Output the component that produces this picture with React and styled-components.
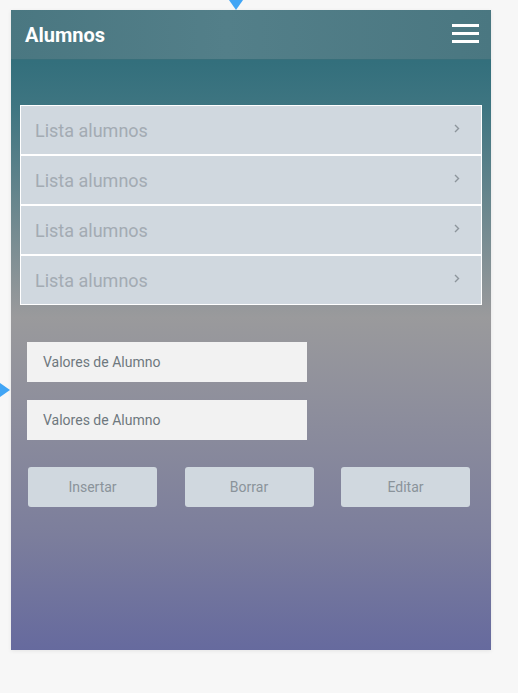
import styled, { createGlobalStyle } from 'styled-components';

const GlobalStyle = createGlobalStyle`
    html, body {
        margin: 0;
        padding: 0;
        background: #f7f7f7;
        font-family: Roboto, "Liberation Sans", sans-serif;
    }
`

const Page = styled.div`
    position: relative;
    width: 518px;
    height: 693px;
    padding: 10px 0 0 11px;
    box-sizing: border-box;
`

const Marker = styled.span`
    position: absolute;
    width: 0;
    height: 0;
    border-style: solid;
    border-color: transparent;
    ${props => props.side === 'top' ? `
        left: 229px;
        top: 0;
        border-width: 10px 7px 0 7px;
        border-top-color: #41a5f5;
    ` : `
        left: 0;
        top: 383px;
        border-width: 7px 0 7px 10px;
        border-left-color: #41a5f5;
    `}
`

const Card = styled.div`
    width: 480px;
    height: 640px;
    display: flex;
    flex-direction: column;
    background: linear-gradient(180deg, #336f7c 0%, #336f7c 8%, #3e7581 15%, #9a9a9c 48%, #7c7e9c 82%, #666a9e 100%);
    box-shadow: 0 1px 4px rgba(0, 0, 0, 0.08);
`

const Header = styled.header`
    height: 49px;
    display: flex;
    align-items: center;
    justify-content: space-between;
    padding: 0 12px 0 14px;
    background: linear-gradient(90deg, #4a7781 0%, #537f89 45%, #4a7781 100%);
    border-bottom: 1px solid #386f7a;
`

const Title = styled.h1`
    margin: 0;
    font-size: 20px;
    font-weight: bold;
    color: #ffffff;
`

const Burger = styled.div`
    width: 27px;
    display: flex;
    flex-direction: column;
    gap: 5px;
    margin-bottom: 2px;
    span {
        height: 3px;
        background: #ffffff;
    }
`

const List = styled.ul`
    list-style: none;
    margin: 45px 9px 0 9px;
    padding: 0;
    border: 1px solid #ffffff;
    background: #ffffff;
    display: flex;
    flex-direction: column;
    gap: 2px;
`

const Row = styled.li`
    height: 48px;
    display: flex;
    align-items: center;
    justify-content: space-between;
    padding: 0 21px 0 14px;
    background: #d0d8df;
    font-size: 18px;
    color: #a3abb3;
`

const Chevron = styled.svg`
    width: 6px;
    height: 9px;
    margin-top: -4px;
`

const Form = styled.div`
    display: flex;
    flex-direction: column;
    gap: 18px;
    padding: 37px 0 0 16px;
`

const Field = styled.div`
    width: 280px;
    height: 40px;
    box-sizing: border-box;
    display: flex;
    align-items: center;
    padding-left: 16px;
    background: #f2f2f2;
    font-size: 14px;
    color: #6e787e;
`

const Actions = styled.div`
    display: flex;
    gap: 27.5px;
    padding: 27px 0 0 17px;
`

const Button = styled.button`
    width: 129px;
    height: 40px;
    border: none;
    border-radius: 3px;
    background: #d0d8df;
    font-family: Roboto, "Liberation Sans", sans-serif;
    font-size: 14px;
    color: #8a939a;
`

const App = () => {
    return (
        <Page>
            <GlobalStyle />
            <Marker side='top' />
            <Marker side='left' />
            <Card>
                <Header>
                    <Title>Alumnos</Title>
                    <Burger>
                        <span />
                        <span />
                        <span />
                    </Burger>
                </Header>
                <List>
                    {[0, 1, 2, 3].map(i => (
                        <Row key={i}>
                            Lista alumnos
                            <Chevron viewBox='0 0 6 9'>
                                <path d='M1 1 L4.5 4.5 L1 8' fill='none' stroke='#8d959c' strokeWidth='1.4' />
                            </Chevron>
                        </Row>
                    ))}
                </List>
                <Form>
                    <Field>Valores de Alumno</Field>
                    <Field>Valores de Alumno</Field>
                </Form>
                <Actions>
                    <Button>Insertar</Button>
                    <Button>Borrar</Button>
                    <Button>Editar</Button>
                </Actions>
            </Card>
        </Page>
    )
}

export default App
